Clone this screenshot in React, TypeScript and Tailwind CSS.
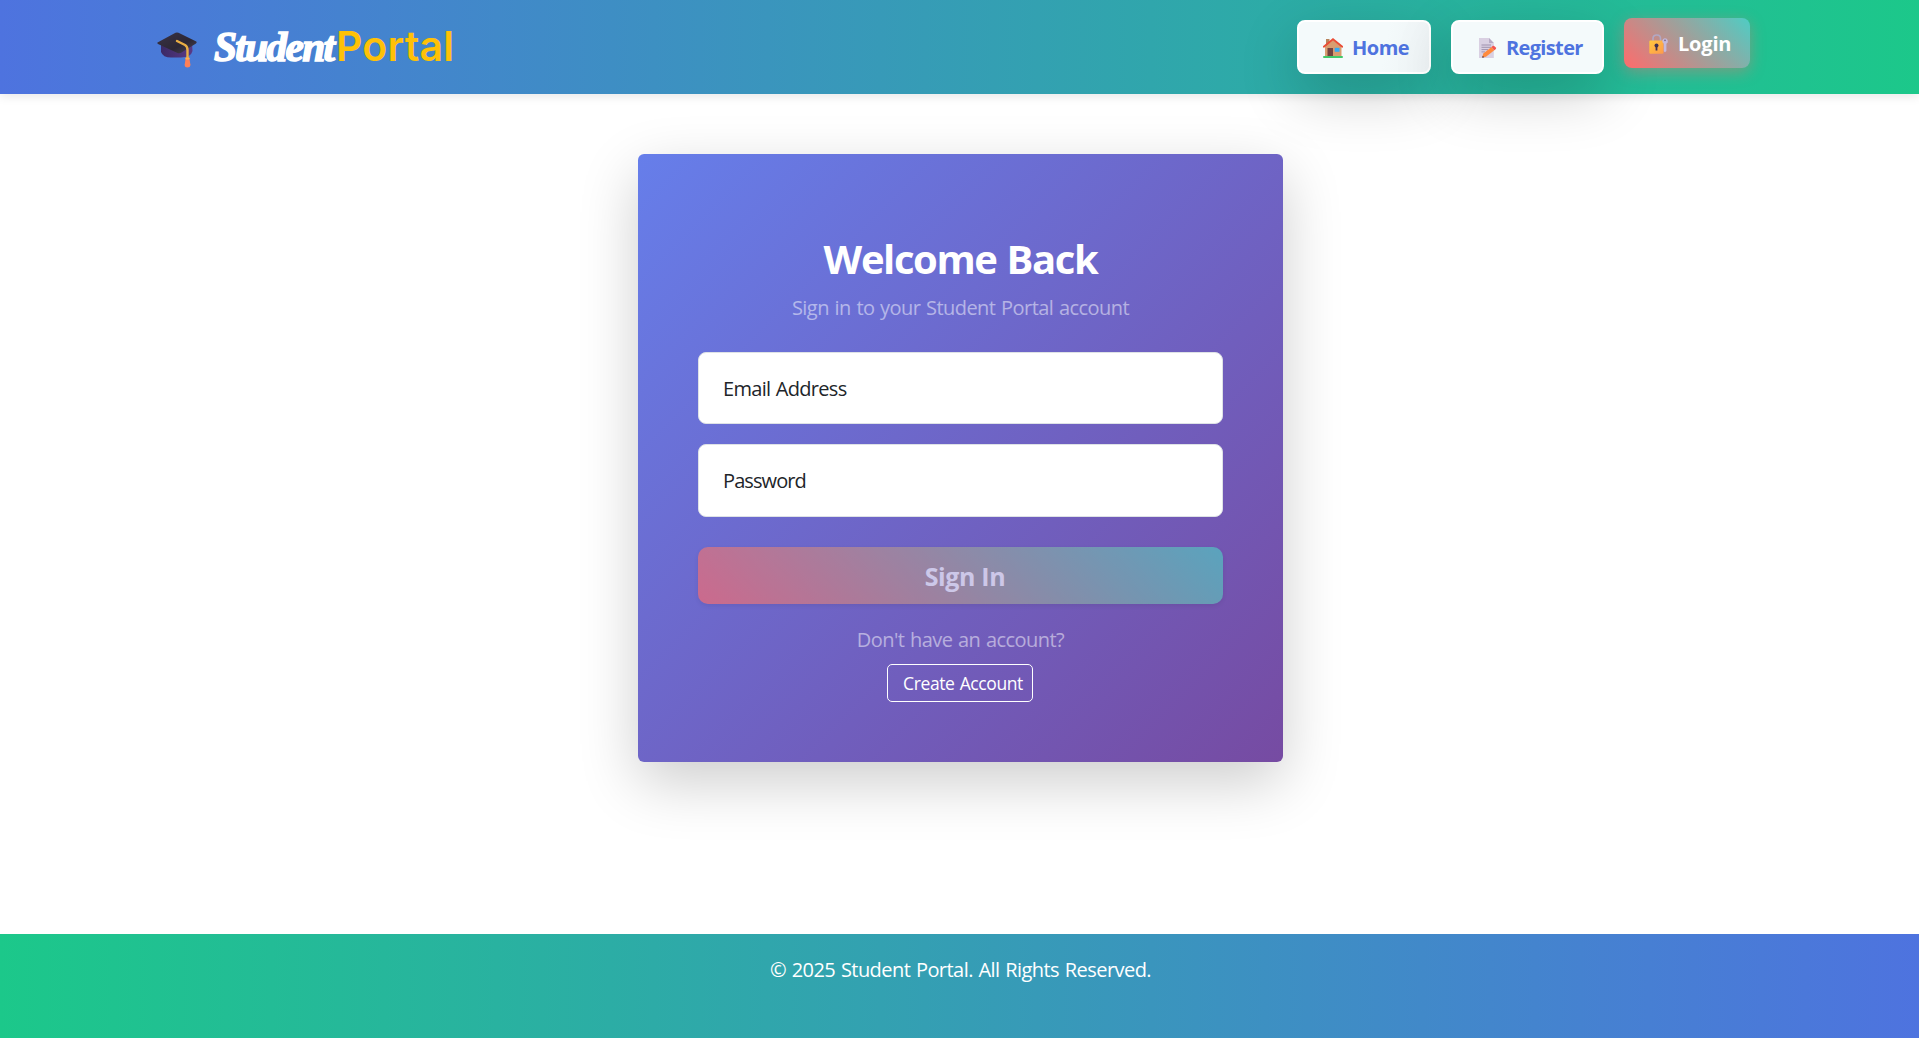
import React from "react";

const ui = "font-['Open_Sans',sans-serif]";

function Cap() {
  return (
    <svg width="40" height="36" viewBox="0 0 40 36" fill="none">
      <defs>
        <linearGradient id="capBase" x1="0" x2="1">
          <stop stopColor="#3b2a66" />
          <stop offset="1" stopColor="#5a3a86" />
        </linearGradient>
        <linearGradient id="capTop" x1="0" y1="0" x2="1" y2="1">
          <stop stopColor="#3a3346" />
          <stop offset=".6" stopColor="#2c2735" />
          <stop offset="1" stopColor="#4b4655" />
        </linearGradient>
      </defs>
      <path d="M4 11 L4 20 Q6 25.5 14 25.5 H24 Q34 25.5 35.5 19 L35 10Z" fill="url(#capBase)" />
      <path d="M0.5 10.5 L18.5 .8 Q20 .2 21.5 .8 L39.3 9.5 Q40.2 10.5 39 11.5 L24.5 20.5 Q22.5 21.8 20.5 21 L1 12 Q0 11.2.5 10.5Z" fill="url(#capTop)" />
      <path d="M20 9 L28 13 Q30.5 14.5 30.5 18 V28" stroke="#e9ae45" strokeWidth="2.4" strokeLinecap="round" />
      <path d="M28.7 26 Q30.5 24.5 32.3 26 L33.5 33 Q33.2 35.5 30.5 35.5 Q27.8 35.5 27.6 33Z" fill="#ff8058" />
      <rect x="28.3" y="25.5" width="4.4" height="2" rx="1" fill="#ffb04d" />
    </svg>
  );
}

function House() {
  return (
    <svg width="20" height="20" viewBox="0 0 20 20">
      <rect x="3" y="1" width="3.5" height="7" fill="#b8835c" />
      <path d="M2 8.5 L10 2 L18.5 8.5 V18.5 H2Z" fill="#d99d70" />
      <path d="M.8 8.8 L10 1.2 L19.3 8.8" fill="none" stroke="#ea4c35" strokeWidth="1.8" strokeLinecap="round" />
      <rect x="4.5" y="10" width="5.5" height="8.5" fill="#74433f" />
      <rect x="11.7" y="9.8" width="4.8" height="4" fill="#35aaf5" />
      <rect x="0" y="18" width="20" height="2" rx="1" fill="#42c96a" />
    </svg>
  );
}

function Memo() {
  return (
    <svg width="18" height="20" viewBox="0 0 18 20">
      <path d="M0 0 H10 L14.8 5 V20 H0Z" fill="#d9d0e2" />
      <path d="M10 0 V5 H14.8Z" fill="#b7aac5" />
      <path d="M2.5 7 H12 M2.5 9.3 H12 M2.5 11.6 H9 M2.5 13.9 H6" stroke="#998ba8" strokeWidth=".9" />
      <path d="M4.3 15.6 L12.5 9 L15.3 12.3 L7 18.8 L3.2 19.6Z" fill="#ff8a3d" />
      <path d="M12.5 9 L14 7.8 Q15 7.3 16.8 9.4 Q17.6 10.5 16.6 11.3 L15.3 12.3Z" fill="#f4544f" />
      <path d="M3.7 17.8 L3.2 19.7 L5.3 19.2Z" fill="#4b3440" />
    </svg>
  );
}

function Lock() {
  return (
    <svg width="20" height="20" viewBox="0 0 20 20">
      <defs>
        <linearGradient id="lockBody" x1="0" y1="0" x2="1" y2="1">
          <stop stopColor="#ffc83d" />
          <stop offset="1" stopColor="#ff9a4c" />
        </linearGradient>
      </defs>
      <path d="M4 8 V4.5 Q4 1 7.8 1 Q11.5 1 11.5 4.5 V8" fill="none" stroke="#b2a8c4" strokeWidth="1.6" />
      <rect x=".3" y="6.5" width="14.2" height="13.2" rx="1.2" fill="url(#lockBody)" />
      <circle cx="7.5" cy="11.5" r="2" fill="#3f3150" />
      <rect x="6.6" y="12" width="1.8" height="4.5" fill="#3f3150" />
      <path d="M15.9 4.2 A3 3 0 0 1 17.4 9.8 V17 L16 18.3 L14.8 17.2 V9.8 A3 3 0 0 1 15.9 4.2Z" fill="#c4b9dc" />
      <circle cx="16" cy="6.3" r=".9" fill="#75668c" />
    </svg>
  );
}

export default function App() {
  return (
    <div className={`flex min-h-screen flex-col bg-white text-[20px] tracking-[-0.55px] [word-spacing:1px] ${ui}`}>
      <header className="relative flex h-[94px] justify-between bg-[linear-gradient(90deg,#4e73df,#1cc88a)] pr-[169px] pl-[157px] shadow-[0_2px_10px_rgba(0,0,0,0.1)]">
        <a className="flex items-center whitespace-nowrap" href="#">
          <span className="pt-[5px]"><Cap /></span>
          <span className="ml-[17px] w-[122px]">
            <span className="inline-block origin-left scale-x-[0.96] font-['Liberation_Serif',serif] text-[43px] font-bold tracking-[-1.7px] text-white italic [-webkit-text-stroke:1.6px_white]">Student</span>
          </span>
          <span className="font-['Inter',sans-serif] text-[41px] font-semibold tracking-[0.2px] text-[#ffc107]">Portal</span>
        </a>
        <nav className="flex items-start gap-5 pt-5 font-bold tracking-[-0.5px] text-[#4e73df]">
          <a href="#" className="flex h-[54px] w-[134px] items-center rounded-lg border-2 border-white bg-[linear-gradient(100deg,#f4fafb_65%,#eef3f5)] pt-[2px] pl-6 shadow-[0_20px_60px_rgba(0,0,0,0.2)]">
            <House /><span className="ml-[9px]">Home</span>
          </a>
          <a href="#" className="flex h-[54px] w-[153px] items-center rounded-lg border-2 border-white bg-[#f4fafb] pt-[2px] pl-[26px] tracking-[-0.65px] shadow-[0_20px_60px_rgba(0,0,0,0.2)]">
            <Memo /><span className="ml-[9px]">Register</span>
          </a>
          <a href="#" className="-mt-[2px] flex h-[50px] w-[126px] items-center rounded-lg bg-[linear-gradient(45deg,#ff6b6b,#4ecdc4)] pt-[2px] pl-[25px] tracking-[-0.2px] text-white shadow-[0_4px_15px_rgba(255,107,107,0.4)]">
            <Lock /><span className="ml-[9px]">Login</span>
          </a>
        </nav>
      </header>

      <main className="flex flex-1 justify-center pt-[60px] pl-[2px]">
        <section className="flex h-[608px] w-[645px] flex-col rounded-md bg-[linear-gradient(135deg,#667eea_0%,#764ba2_100%)] px-[60px] pt-[80px] text-center shadow-[0_20px_60px_rgba(0,0,0,0.2)]">
          <h1 className="h-[52px] text-[40px] leading-[50px] font-bold tracking-[-1.4px] text-white">Welcome Back</h1>
          <p className="mt-[7px] leading-[30px] text-white/50">Sign in to your Student Portal account</p>
          <div className="mt-[29px] flex h-[72px] items-center rounded-lg border border-[#dee2e6] bg-white pt-[2px] pl-[24px] tracking-[-0.7px] text-[#212529]">Email Address</div>
          <div className="mt-5 flex h-[73px] items-center rounded-lg border border-[#dee2e6] bg-white pt-px pl-[24px] tracking-[-0.9px] text-[#212529]">Password</div>
          <button className="mt-[30px] h-[57px] rounded-[10px] bg-[linear-gradient(45deg,#ff6b6b,#4ecdc4)] pt-[2px] pl-[9px] text-[25px] font-bold tracking-[-0.35px] text-white opacity-65 shadow-[0_2px_4px_rgba(0,0,0,0.1)]">Sign In</button>
          <p className="mt-[21px] leading-[30px] text-white/50">Don't have an account?</p>
          <a href="#" className="mt-[9px] mr-px flex h-[38px] w-[146px] items-center justify-center self-center rounded-[5px] border border-white pl-[6px] text-[17.5px] tracking-[-0.4px] whitespace-nowrap text-white">Create Account</a>
        </section>
      </main>

      <footer className="h-[104px] bg-[linear-gradient(90deg,#1cc88a,#4e73df)] pt-[21px] pl-[2px] text-center leading-[30px] text-white">
        © 2025 Student Portal. All Rights Reserved.
      </footer>
    </div>
  );
}
